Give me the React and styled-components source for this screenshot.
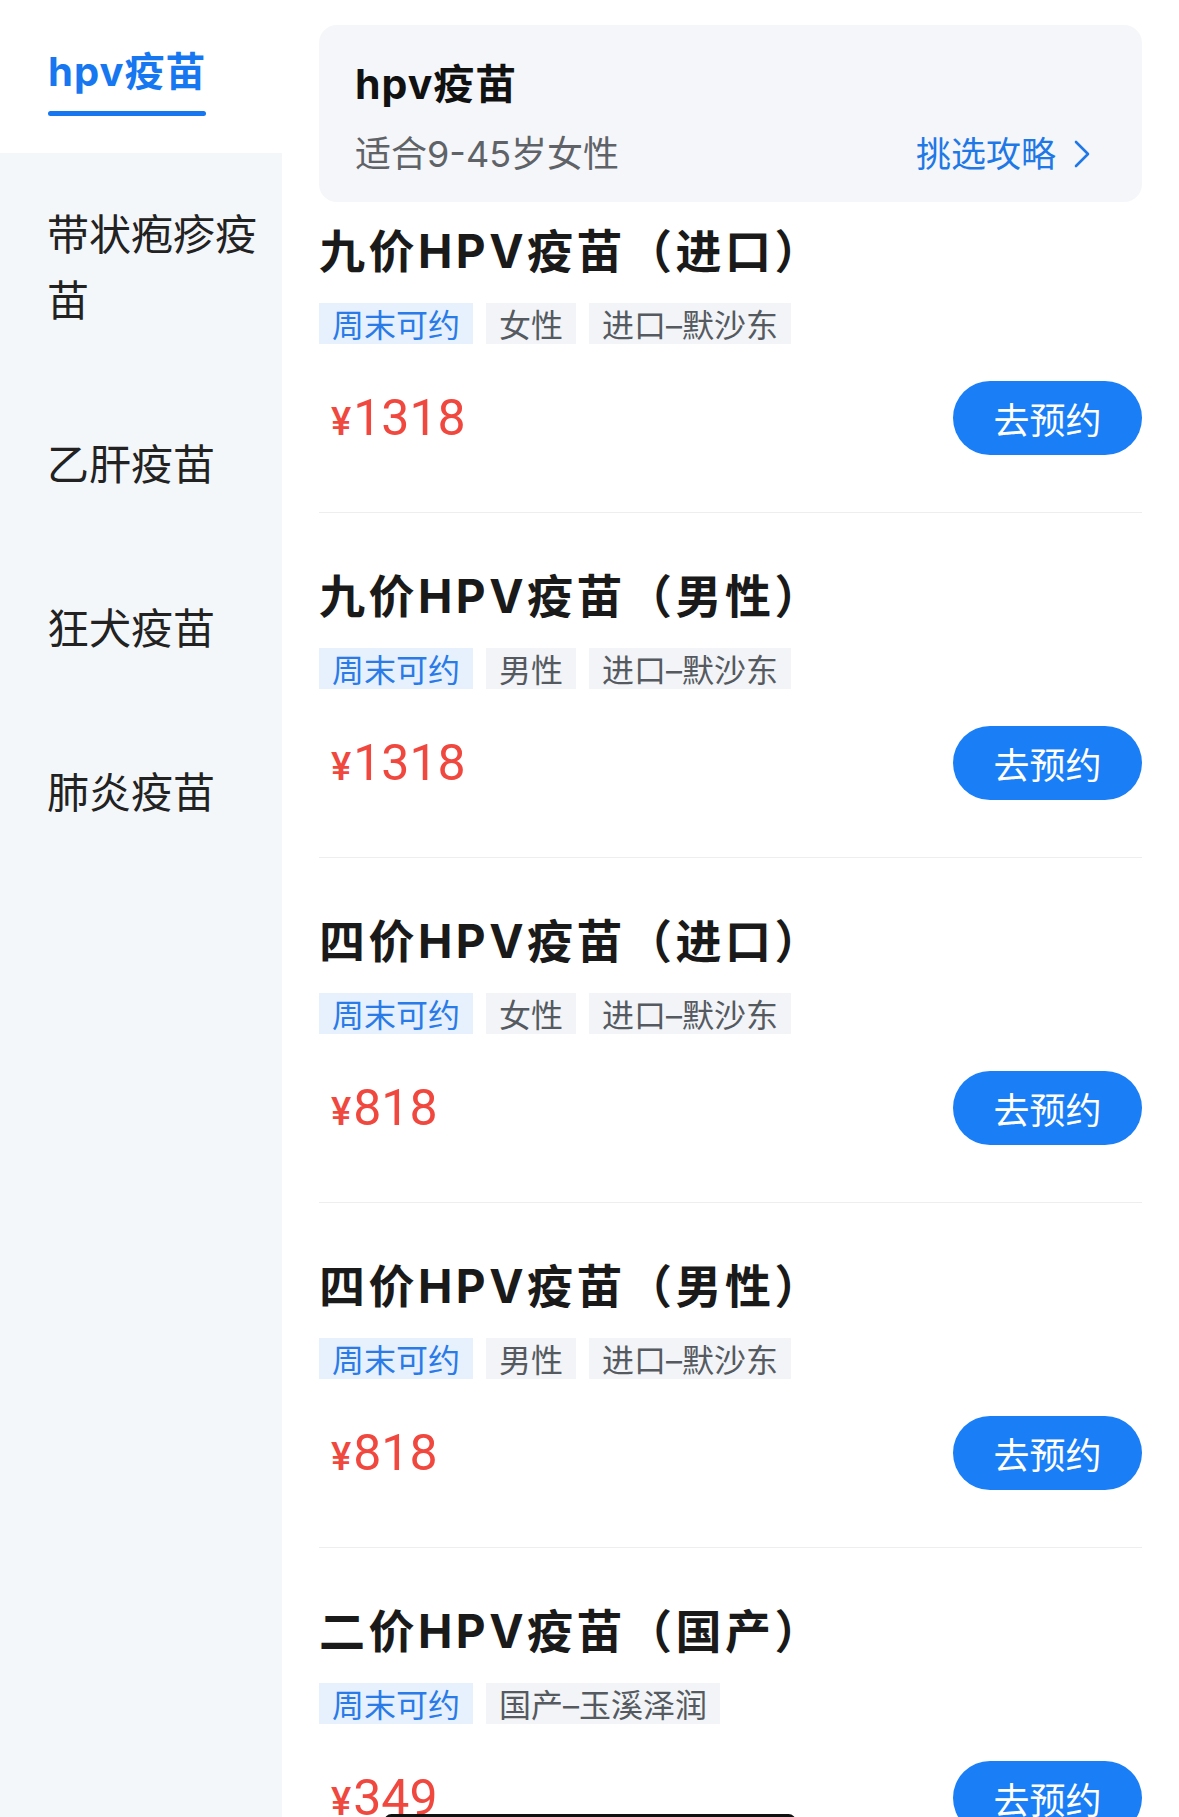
import React from "react";
import styled, { createGlobalStyle } from "styled-components";

const FONT = `Inter, "Noto Sans CJK SC", sans-serif`;
const NUM_FONT = `Roboto, "Noto Sans CJK SC", sans-serif`;

const GlobalStyle = createGlobalStyle`
  html, body {
    margin: 0;
    padding: 0;
    background: #ffffff;
    overflow: hidden;
    font-family: ${FONT};
    -webkit-font-smoothing: antialiased;
  }
  * { box-sizing: border-box; }
`;

const Page = styled.div`
  position: relative;
  display: flex;
  width: 1179px;
  height: 1817px;
  overflow: hidden;
  background: #ffffff;
`;

const Sidebar = styled.nav`
  width: 282px;
  flex-shrink: 0;
  display: flex;
  flex-direction: column;
  background: #f4f7fa;
`;

const SideActive = styled.div`
  background: #ffffff;
  padding: 46px 20px 37px 48px;
`;

const ActiveLabel = styled.div`
  display: inline-flex;
  flex-direction: column;
`;

const ActiveText = styled.span`
  font-size: 40px;
  font-weight: 700;
  line-height: 52px;
  color: #1677f0;
  letter-spacing: 1px;
`;

const Underline = styled.span`
  display: block;
  height: 5px;
  margin-top: 13px;
  border-radius: 3px;
  background: #1677f0;
`;

const SideItem = styled.div`
  padding: 49px 18px 49px 47px;
  font-size: 42px;
  line-height: 66px;
  color: #222222;
`;

const Main = styled.main`
  flex: 1;
  min-width: 0;
  padding: 25px 37px 0 37px;
`;

const GuideCard = styled.section`
  background: #f4f6f9;
  border-radius: 18px;
  padding: 33px 52px 24px 36px;
`;

const CardTitle = styled.div`
  font-size: 41px;
  font-weight: 700;
  line-height: 52px;
  color: #111111;
  letter-spacing: 1px;
`;

const CardSubRow = styled.div`
  margin-top: 20px;
  height: 48px;
  display: flex;
  align-items: center;
  justify-content: space-between;
`;

const CardSub = styled.span`
  font-size: 36px;
  line-height: 48px;
  color: #5f6368;
`;

const GuideLink = styled.a`
  display: flex;
  align-items: center;
  gap: 18px;
  font-size: 35px;
  line-height: 48px;
  color: #1f78e6;
  text-decoration: none;
`;

const Product = styled.article`
  padding: ${(p) => (p.$first ? 23 : 57)}px 0 57px 0;
  border-bottom: 1px solid #eeeeee;
`;

const Title = styled.h3`
  margin: 0;
  font-size: 46px;
  font-weight: 700;
  line-height: 52px;
  color: #1a1a1a;
  letter-spacing: 3.5px;
  white-space: nowrap;
`;

const TagRow = styled.div`
  margin-top: 26px;
  display: flex;
  gap: 13px;
`;

const Tag = styled.span`
  height: 41px;
  padding: 5px 13px 0 13px;
  font-size: 32px;
  line-height: 36px;
  white-space: nowrap;
  background: ${(p) => (p.$accent ? "#e7f1fd" : "#f2f4f7")};
  color: ${(p) => (p.$accent ? "#2a7be8" : "#555a61")};
`;

const PriceRow = styled.div`
  margin-top: 37px;
  display: flex;
  align-items: center;
  justify-content: space-between;
`;

const Price = styled.div`
  display: flex;
  align-items: baseline;
  padding-left: 12px;
  font-family: ${NUM_FONT};
  font-weight: 400;
  color: #f0483e;
`;

const Yen = styled.span`
  font-size: 38px;
  font-weight: 500;
  margin-right: 2px;
`;

const Amount = styled.span`
  font-size: 50px;
  line-height: 1;
`;

const BookButton = styled.button`
  width: 189px;
  height: 74px;
  border: none;
  border-radius: 37px;
  background: #1a7ef7;
  color: #ffffff;
  font-family: ${FONT};
  font-size: 36px;
  padding: 0;
  cursor: pointer;
`;

const HomeIndicator = styled.div`
  position: absolute;
  left: 50%;
  bottom: -12px;
  transform: translateX(-50%);
  width: 412px;
  height: 15px;
  border-radius: 8px;
  background: #111111;
`;

const sideItems = ["带状疱疹疫苗", "乙肝疫苗", "狂犬疫苗", "肺炎疫苗"];

const products = [
  { name: "九价HPV疫苗（进口）", tags: ["女性", "进口–默沙东"], price: "1318" },
  { name: "九价HPV疫苗（男性）", tags: ["男性", "进口–默沙东"], price: "1318" },
  { name: "四价HPV疫苗（进口）", tags: ["女性", "进口–默沙东"], price: "818" },
  { name: "四价HPV疫苗（男性）", tags: ["男性", "进口–默沙东"], price: "818" },
  { name: "二价HPV疫苗（国产）", tags: ["国产–玉溪泽润"], price: "349" },
];

const Chevron = () => (
  <svg width="16" height="28" viewBox="0 0 16 28" fill="none">
    <polyline
      points="2,2 14,14 2,26"
      stroke="#1f78e6"
      strokeWidth="2.6"
      strokeLinecap="round"
      strokeLinejoin="round"
    />
  </svg>
);

export default function App() {
  return (
    <>
      <GlobalStyle />
      <Page>
        <Sidebar>
          <SideActive>
            <ActiveLabel>
              <ActiveText>hpv疫苗</ActiveText>
              <Underline />
            </ActiveLabel>
          </SideActive>
          {sideItems.map((s) => (
            <SideItem key={s}>{s}</SideItem>
          ))}
        </Sidebar>
        <Main>
          <GuideCard>
            <CardTitle>hpv疫苗</CardTitle>
            <CardSubRow>
              <CardSub>适合9-45岁女性</CardSub>
              <GuideLink href="#">
                挑选攻略
                <Chevron />
              </GuideLink>
            </CardSubRow>
          </GuideCard>
          {products.map((p, i) => (
            <Product key={p.name} $first={i === 0}>
              <Title>{p.name}</Title>
              <TagRow>
                <Tag $accent>周末可约</Tag>
                {p.tags.map((t) => (
                  <Tag key={t}>{t}</Tag>
                ))}
              </TagRow>
              <PriceRow>
                <Price>
                  <Yen>¥</Yen>
                  <Amount>{p.price}</Amount>
                </Price>
                <BookButton>去预约</BookButton>
              </PriceRow>
            </Product>
          ))}
        </Main>
        <HomeIndicator />
      </Page>
    </>
  );
}
